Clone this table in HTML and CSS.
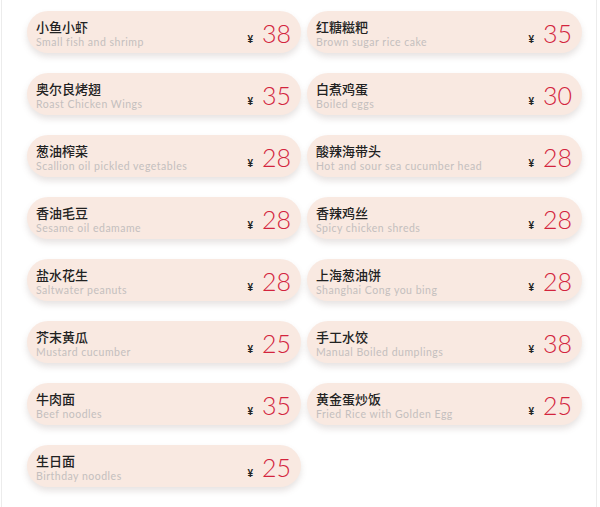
FILE: index.html
```html
<!DOCTYPE html>
<html lang="zh">
<head>
<meta charset="utf-8">
<title>菜单</title>
<link rel="stylesheet" href="styles.css">
</head>
<body>
<div class="frame">
  <div class="menu">
    <div class="card"><div class="info"><div class="name">小鱼小虾</div><div class="en">Small fish and shrimp</div></div><div class="price"><span class="yen">¥</span><span class="num">38</span></div></div>
    <div class="card"><div class="info"><div class="name">红糖糍粑</div><div class="en">Brown sugar rice cake</div></div><div class="price"><span class="yen">¥</span><span class="num">35</span></div></div>
    <div class="card"><div class="info"><div class="name">奥尔良烤翅</div><div class="en">Roast Chicken Wings</div></div><div class="price"><span class="yen">¥</span><span class="num">35</span></div></div>
    <div class="card"><div class="info"><div class="name">白煮鸡蛋</div><div class="en">Boiled eggs</div></div><div class="price"><span class="yen">¥</span><span class="num">30</span></div></div>
    <div class="card"><div class="info"><div class="name">葱油榨菜</div><div class="en">Scallion oil pickled vegetables</div></div><div class="price"><span class="yen">¥</span><span class="num">28</span></div></div>
    <div class="card"><div class="info"><div class="name">酸辣海带头</div><div class="en">Hot and sour sea cucumber head</div></div><div class="price"><span class="yen">¥</span><span class="num">28</span></div></div>
    <div class="card"><div class="info"><div class="name">香油毛豆</div><div class="en">Sesame oil edamame</div></div><div class="price"><span class="yen">¥</span><span class="num">28</span></div></div>
    <div class="card"><div class="info"><div class="name">香辣鸡丝</div><div class="en">Spicy chicken shreds</div></div><div class="price"><span class="yen">¥</span><span class="num">28</span></div></div>
    <div class="card"><div class="info"><div class="name">盐水花生</div><div class="en">Saltwater peanuts</div></div><div class="price"><span class="yen">¥</span><span class="num">28</span></div></div>
    <div class="card"><div class="info"><div class="name">上海葱油饼</div><div class="en">Shanghai Cong you bing</div></div><div class="price"><span class="yen">¥</span><span class="num">28</span></div></div>
    <div class="card"><div class="info"><div class="name">芥末黄瓜</div><div class="en">Mustard cucumber</div></div><div class="price"><span class="yen">¥</span><span class="num">25</span></div></div>
    <div class="card"><div class="info"><div class="name">手工水饺</div><div class="en">Manual Boiled dumplings</div></div><div class="price"><span class="yen">¥</span><span class="num">38</span></div></div>
    <div class="card"><div class="info"><div class="name">牛肉面</div><div class="en">Beef noodles</div></div><div class="price"><span class="yen">¥</span><span class="num">35</span></div></div>
    <div class="card"><div class="info"><div class="name">黄金蛋炒饭</div><div class="en">Fried Rice with Golden Egg</div></div><div class="price"><span class="yen">¥</span><span class="num">25</span></div></div>
    <div class="card"><div class="info"><div class="name">生日面</div><div class="en">Birthday noodles</div></div><div class="price"><span class="yen">¥</span><span class="num">25</span></div></div>
  </div>
</div>
</body>
</html>
```

FILE: styles.css
```css
html, body {
  margin: 0;
  padding: 0;
  background: #ffffff;
}
.frame {
  box-sizing: border-box;
  margin-left: 1px;
  width: 596px;
  height: 507px;
  border-left: 1px solid #ececec;
  border-right: 1px solid #ececec;
  overflow: hidden;
}
.menu {
  display: grid;
  grid-template-columns: 274px 275px;
  grid-auto-rows: 42px;
  column-gap: 6px;
  row-gap: 20px;
  padding: 11px 0 0 25px;
}
.card {
  display: flex;
  align-items: stretch;
  background: #f9e9e1;
  border-radius: 21px;
  box-shadow: 0 4px 6px rgba(120, 100, 95, 0.18);
  padding: 0 10px 0 9px;
}
.info {
  flex: 1;
  display: flex;
  flex-direction: column;
  padding-top: 7px;
}
.name {
  font-family: "Noto Sans CJK SC", sans-serif;
  font-weight: 500;
  font-size: 13px;
  line-height: 17px;
  color: #222222;
}
.en {
  margin-top: 1px;
  font-family: "Lato", "Liberation Sans", sans-serif;
  font-size: 10.5px;
  line-height: 13px;
  color: #c4bfbe;
  letter-spacing: 0.5px;
}
.price {
  display: flex;
  align-items: baseline;
  gap: 9px;
  padding-top: 7px;
}
.yen {
  font-family: "Liberation Sans", sans-serif;
  font-weight: bold;
  font-size: 10px;
  color: #222222;
}
.num {
  font-family: "Lato", "Liberation Sans", sans-serif;
  font-weight: 300;
  font-size: 25px;
  line-height: 30px;
  color: #d3243d;
}
```
